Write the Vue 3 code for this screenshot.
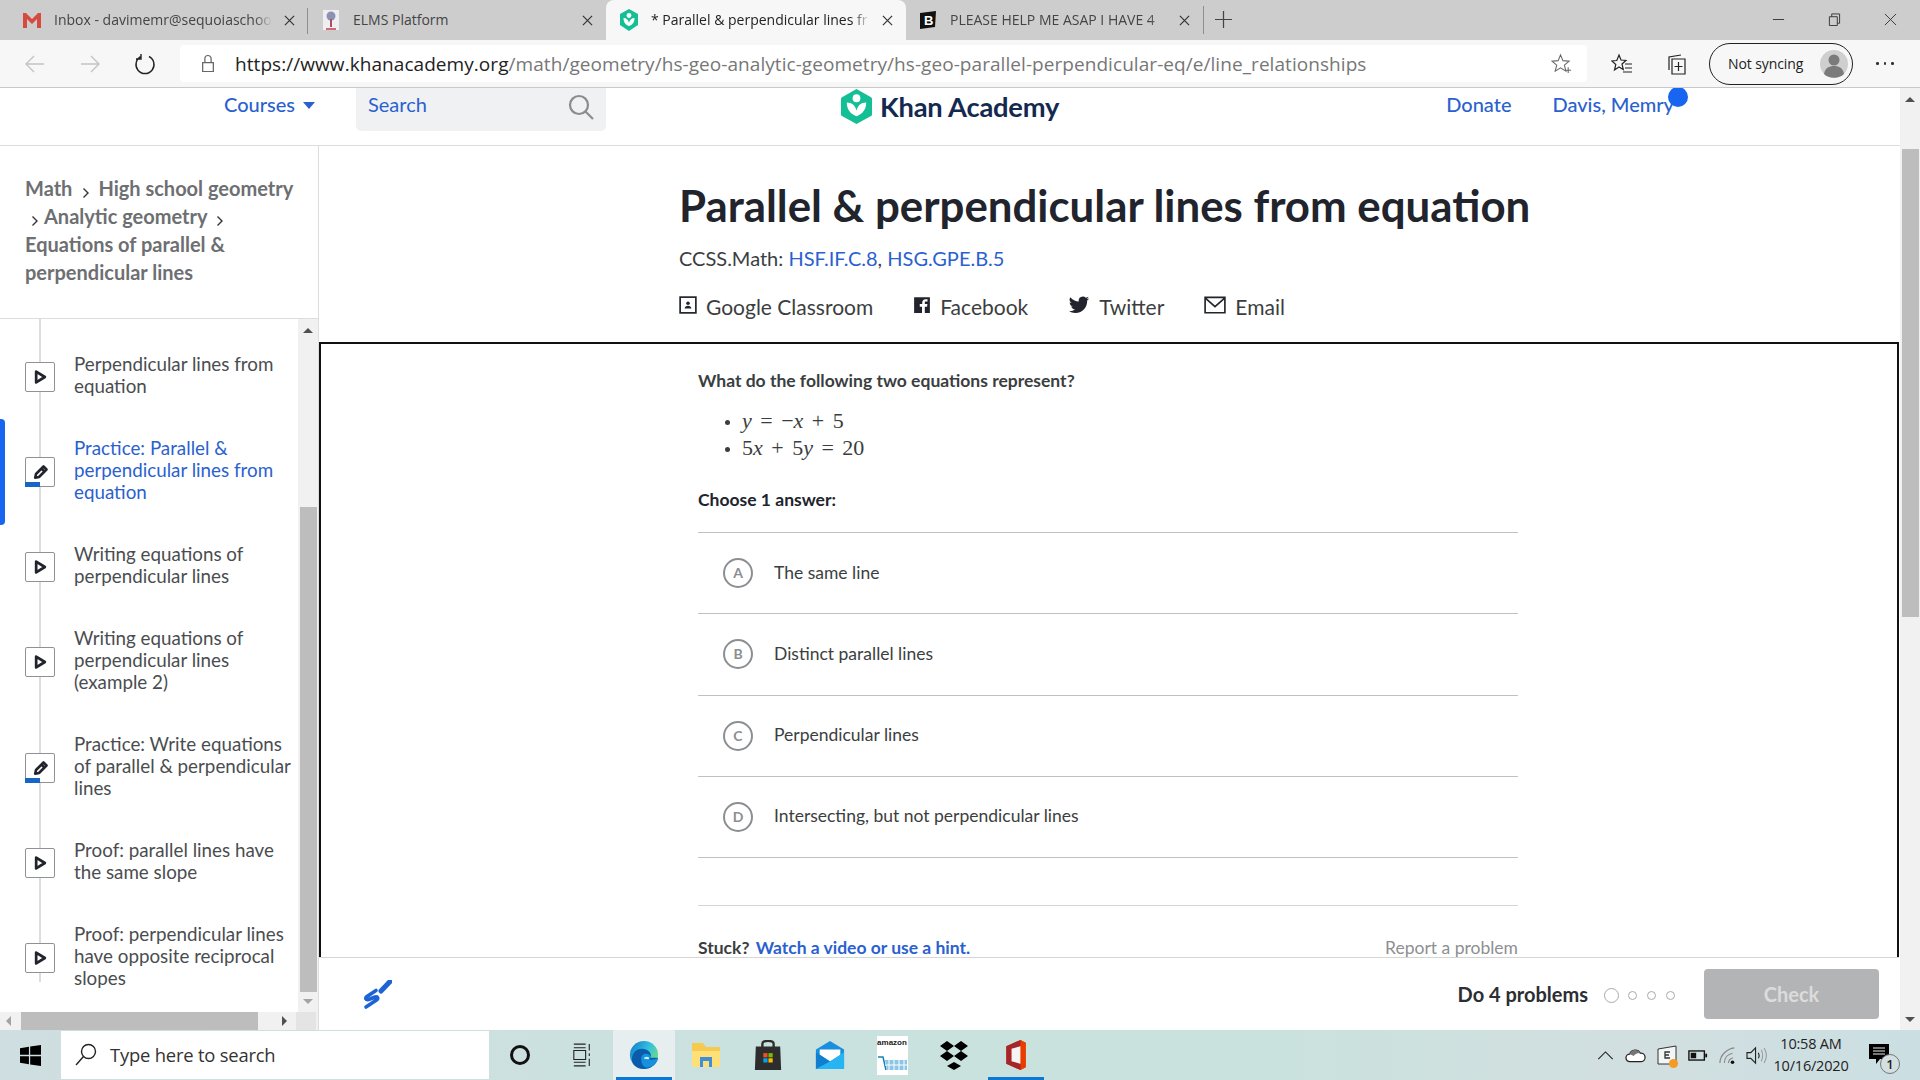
<script setup>
const tabs = [
  { id: 'gmail', title: 'Inbox - davimemr@sequoiaschoo', width: 308 },
  { id: 'elms', title: 'ELMS Platform', width: 298 },
  { id: 'ka', title: '* Parallel & perpendicular lines fr', width: 300, active: true },
  { id: 'brainly', title: 'PLEASE HELP ME ASAP I HAVE 4', width: 298 },
]

const lessons = [
  { kind: 'video', lines: 'Perpendicular lines from equation' },
  { kind: 'practice', lines: 'Practice: Parallel & perpendicular lines from equation', active: true },
  { kind: 'video', lines: 'Writing equations of perpendicular lines' },
  { kind: 'video', lines: 'Writing equations of perpendicular lines (example 2)' },
  { kind: 'practice', lines: 'Practice: Write equations of parallel & perpendicular lines' },
  { kind: 'video', lines: 'Proof: parallel lines have the same slope' },
  { kind: 'video', lines: 'Proof: perpendicular lines have opposite reciprocal slopes' },
]

const choices = [
  { key: 'A', text: 'The same line' },
  { key: 'B', text: 'Distinct parallel lines' },
  { key: 'C', text: 'Perpendicular lines' },
  { key: 'D', text: 'Intersecting, but not perpendicular lines' },
]
</script>

<template>
  <div class="screen">
    <!-- browser tabs -->
    <div class="tabs">
      <div
        v-for="t in tabs"
        :key="t.id"
        class="tab"
        :class="{ active: t.active, [t.id]: true }"
        :style="{ width: t.width + 'px' }"
      >
        <svg v-if="t.id === 'gmail'" class="fav" viewBox="0 0 20 20">
          <path d="M1 3h3l6 6 6-6h3v15h-4V9l-5 5-5-5v9H1z" fill="#d54b3d" />
        </svg>
        <svg v-else-if="t.id === 'elms'" class="fav" viewBox="0 0 20 20">
          <rect x="2" width="16" height="20" fill="#f0eef2" />
          <circle cx="10" cy="6" r="4.5" fill="#8a93b5" />
          <path d="M9 9h2v8H9z" fill="#b0505a" />
          <path d="M5 18h10v2H5z" fill="#cf6b73" />
        </svg>
        <svg v-else-if="t.id === 'ka'" class="fav" viewBox="0 0 20 22">
          <path d="M10 0l9 5v11l-9 6-9-6V5z" fill="#14bf96" />
          <circle cx="10" cy="6.5" r="2.4" fill="#fff" />
          <path d="M4.5 9c3 0 5 2 5.5 5 .5-3 2.500-5 5.500-5 0 4-2 7-5.500 8-3.500-1-5.500-4-5.500-8z" fill="#fff" />
        </svg>
        <svg v-else class="fav" viewBox="0 0 20 20">
          <path d="M2 3l16-2-1 16-15 2z" fill="#111" />
          <text x="6" y="15" class="fav-b">B</text>
        </svg>
        <span class="tab-title">{{ t.title }}</span>
        <svg class="tab-x" viewBox="0 0 12 12"><path d="M1 1l10 10M11 1L1 11" /></svg>
      </div>
      <div class="plus">
        <svg viewBox="0 0 18 18"><path d="M9 0v18M0 9h18" /></svg>
      </div>
      <div class="win-btns">
        <svg viewBox="0 0 14 14"><path d="M1 7h12" /></svg>
        <svg viewBox="0 0 14 14"><path d="M1.500 4h8.500v9.500H1.500zM4 4V1h8.500v10H10" /></svg>
        <svg viewBox="0 0 14 14"><path d="M1 1l12 12M13 1L1 13" /></svg>
      </div>
    </div>

    <!-- address bar -->
    <div class="toolbar">
      <svg class="nav-ico dim" viewBox="0 0 22 22"><path d="M20 11H2M10 3l-8 8 8 8" /></svg>
      <svg class="nav-ico dim" viewBox="0 0 22 22"><path d="M2 11h18M12 3l8 8-8 8" /></svg>
      <svg class="nav-ico" viewBox="0 0 22 22"><path d="M7 3.500A9 9 0 1 0 15 3.500M7 1v5H2" /></svg>
      <div class="address">
        <svg class="lock" viewBox="0 0 18 22"><path d="M3 10h12v10H3zM5.500 10V5.500a3.500 3.500 0 0 1 7 0V10" /></svg>
        <span class="url"><span class="host">https://www.khanacademy.org</span>/math/geometry/hs-geo-analytic-geometry/hs-geo-parallel-perpendicular-eq/e/line_relationships</span>
        <svg class="addr-star" viewBox="0 0 22 22"><path d="M10 2l2.500 6 6.500.5-5 4.200 1.600 6.300L10 15.500 4.400 19l1.600-6.300-5-4.200L7.500 8zM18 15v6M15 18h6" /></svg>
      </div>
      <svg class="tool-ico" viewBox="0 0 22 22"><path d="M8 2l2 5 5 .5-4 3.500 1.300 5.500L8 14l-4.500 3 1.300-5.500-4-3.500 5-.5zM14 11h7M14 15h7M12 19h9" /></svg>
      <svg class="tool-ico" viewBox="0 0 22 22"><path d="M6 6h13v15H6zM3 17V4l12-2M12.500 9v9M8.500 13.500h8" /></svg>
      <div class="sync">
        <span>Not syncing</span>
        <svg class="avatar" viewBox="0 0 28 28">
          <circle cx="14" cy="14" r="14" fill="#cfcfcf" />
          <circle cx="14" cy="10" r="5.500" fill="#7b7b7b" />
          <path d="M4 24c1-6 5-8 10-8s9 2 10 8c-5 5-15 5-20 0z" fill="#7b7b7b" />
        </svg>
      </div>
      <div class="more"><i></i><i></i><i></i></div>
    </div>

    <div class="page">
      <div class="site">
        <header class="topnav">
          <a class="nav-link courses">Courses<span class="caret"></span></a>
          <div class="search">
            <span>Search</span>
            <svg viewBox="0 0 26 26"><circle cx="11" cy="11" r="9" /><path d="M17.500 17.500L25 25" /></svg>
          </div>
          <div class="logo">
            <svg viewBox="0 0 34 38">
              <path d="M17 1l15 8.500c.6.300 1 1 1 1.700v16c0 .7-.4 1.400-1 1.700L17 37 2 28.900c-.6-.3-1-1-1-1.700v-16c0-.7.4-1.400 1-1.700z" fill="#14bf96" />
              <circle cx="17" cy="10.500" r="4" fill="#fff" />
              <path d="M7 15c5.500 0 9 3.500 10 8.500 1-5 4.500-8.500 10-8.500 0 7-3.500 12-10 14-6.500-2-10-7-10-14z" fill="#fff" />
            </svg>
            <span>Khan Academy</span>
          </div>
          <a class="nav-link donate">Donate</a>
          <a class="nav-link user">Davis, Memry<i class="dot"></i></a>
        </header>

        <div class="body">
          <aside class="side">
            <div class="crumbs">
              Math<svg class="chev first" viewBox="0 0 8 12"><path d="M1.500 1.500L6 6l-4.500 4.500" /></svg>High school geometry<br />
              <svg class="chev lead" viewBox="0 0 8 12"><path d="M1.500 1.500L6 6l-4.500 4.500" /></svg>Analytic geometry<svg class="chev tail" viewBox="0 0 8 12"><path d="M1.500 1.500L6 6l-4.500 4.500" /></svg><br />
              Equations of parallel &amp;<br />
              perpendicular lines
            </div>
            <div class="list-wrap">
              <div class="list-row">
                <ul class="lessons">
                  <li v-for="(l, i) in lessons" :key="i" class="lesson" :class="{ on: l.active }">
                    <span class="bar" v-if="l.active"></span>
                    <span class="lesson-ico">
                      <svg v-if="l.kind === 'video'" viewBox="0 0 12 14"><path d="M2 2l8 5-8 5z" /></svg>
                      <svg v-else class="pencil" viewBox="0 0 16 16"><path d="M10.500 2.500l3 3-7.500 7.500-3.800.8.800-3.800z" /><path d="M8.500 4.500l3 3" /></svg>
                      <i v-if="l.kind === 'practice'" class="prog"></i>
                    </span>
                    <span class="lesson-text">{{ l.lines }}</span>
                  </li>
                </ul>
                <div class="vscroll">
                  <i class="arr up"></i>
                  <div class="vtrack"><div class="vthumb"></div></div>
                  <i class="arr down"></i>
                </div>
              </div>
              <div class="hscroll">
                <i class="arr left"></i>
                <div class="hthumb"></div>
                <i class="arr right"></i>
                <div class="corner"></div>
              </div>
            </div>
          </aside>

          <main class="main">
            <section class="hero">
              <h1>Parallel &amp; perpendicular lines from equation</h1>
              <p class="ccss">CCSS.Math: <a>HSF.IF.C.8</a>, <a>HSG.GPE.B.5</a></p>
              <div class="share">
                <span>
                  <svg viewBox="0 0 16 16" class="s-ico"><rect x="1" y="1" width="14" height="14" fill="none" stroke="#21242c" stroke-width="1.500" /><circle cx="8" cy="6.500" r="1.600" fill="#21242c" /><path d="M5 11c0-3 6-3 6 0z" fill="#21242c" /></svg>
                  Google Classroom
                </span>
                <span>
                  <svg viewBox="0 0 16 16" class="s-ico"><path d="M1 1h14v14h-4.500V9.500h2l.3-2.300h-2.300V6c0-.7.200-1.100 1.200-1.100h1.200v-2c-.5-.1-1.100-.1-1.700-.1-1.800 0-3 1.100-3 3.100v1.300H6v2.300h2V15H1z" fill="#21242c" /></svg>
                  Facebook
                </span>
                <span>
                  <svg viewBox="0 0 24 24" class="s-ico tw"><path d="M23 4.900a9 9 0 0 1-2.600.7 4.500 4.500 0 0 0 2-2.500 9 9 0 0 1-2.900 1.100A4.500 4.500 0 0 0 11.800 8.300 12.900 12.900 0 0 1 2.500 3.600a4.500 4.500 0 0 0 1.400 6.100 4.500 4.500 0 0 1-2-.6v.1a4.500 4.500 0 0 0 3.600 4.400 4.500 4.500 0 0 1-2 .1 4.500 4.500 0 0 0 4.200 3.100A9 9 0 0 1 1 18.700 12.800 12.800 0 0 0 8 20.700c8.300 0 12.900-6.900 12.900-12.900v-.6A9 9 0 0 0 23 4.900z" fill="#21242c" /></svg>
                  Twitter
                </span>
                <span>
                  <svg viewBox="0 0 20 16" class="s-ico mail"><path d="M1 1h18v14H1zM1.500 2L10 9.500 18.500 2" fill="none" stroke="#21242c" stroke-width="1.500" /></svg>
                  Email
                </span>
              </div>
            </section>

            <section class="exercise">
              <div class="problem">
                <p class="q">What do the following two equations represent?</p>
                <ul class="eqs">
                  <li><i>y</i> = −<i>x</i> + 5</li>
                  <li>5<i>x</i> + 5<i>y</i> = 20</li>
                </ul>
                <p class="pick">Choose 1 answer:</p>
                <div class="choices">
                  <div v-for="c in choices" :key="c.key" class="choice">
                    <span class="letter">{{ c.key }}</span>
                    <span class="choice-text">{{ c.text }}</span>
                  </div>
                </div>
                <div class="stuck">
                  <span class="stuck-q">Stuck? <a>Watch a video or use a hint.</a></span>
                  <span class="report">Report a problem</span>
                </div>
              </div>
            </section>

            <footer class="foot">
              <svg class="scratch" viewBox="0 0 30 30">
                <path d="M28 1.500L19 11" class="pen" />
                <path d="M14 10.500L5 16.500c-3 2.500 0 4 3 2.500l5-2c3-1 3.500 1.500 1.500 3L4 27" class="squig" />
              </svg>
              <div class="goal">
                <b>Do 4 problems</b>
                <span class="dots"><i class="big"></i><i></i><i></i><i></i></span>
              </div>
              <button class="check">Check</button>
            </footer>
          </main>
        </div>
      </div>

      <div class="page-scroll">
        <i class="arr up"></i>
        <div class="ptrack"><div class="pthumb"></div></div>
        <i class="arr down"></i>
      </div>
    </div>

    <!-- windows taskbar -->
    <div class="taskbar">
      <svg class="start" viewBox="0 0 20 20"><path d="M0 3l8.500-1.300v7.700H0zM9.700 1.500L20 0v9.400H9.700zM0 10.600h8.500v7.700L0 17zM9.700 10.600H20V20L9.700 18.500z" /></svg>
      <div class="tsearch">
        <svg viewBox="0 0 22 24"><circle cx="13.500" cy="8.500" r="7" /><path d="M8.500 13.500L1 22" /></svg>
        <span>Type here to search</span>
      </div>
      <div class="apps">
        <span class="app"><i class="cortana"></i></span>
        <span class="app">
          <svg viewBox="0 0 22 26" class="taskview"><path d="M2 1h13M2 5h13M2 8h13v10H2zM2 21h13M2 25h13M19 1v7M19 11v3M19 17v8" /></svg>
        </span>
        <span class="app current">
          <svg viewBox="0 0 32 32">
            <defs>
              <linearGradient id="edgeA" x1="0" y1="0" x2="1" y2="0.600"><stop offset="0" stop-color="#0c78c8" /><stop offset="0.600" stop-color="#35c1e0" /><stop offset="1" stop-color="#6fdc7c" /></linearGradient>
            </defs>
            <circle cx="16" cy="16" r="15" fill="url(#edgeA)" />
            <path d="M3 20C4 10 12 8 18 10c5 2 7 7 4 9h9c-1 7-8 12-15 12C8 31 3 26 3 20z" fill="#0a5cab" />
            <path d="M13 20c0-5 5-7 9-4 2 2 1 4-1 4 2 2 7 1 10-1-1 7-9 12-14 10-3-2-4-5-4-9z" fill="#1591e0" />
            <path d="M16 20c0-2 3-3 5-1.500 1 1 .5 2-.5 2z" fill="#d8ebf0" />
          </svg>
        </span>
        <span class="app">
          <svg viewBox="0 0 30 30">
            <path d="M1 3h11l3 4h14v20H1z" fill="#f6c94f" />
            <path d="M1 11h28v16H1z" fill="#ffdf78" />
            <path d="M9 17h12v10h-3v-6h-6v6H9z" fill="#3f8fd6" />
          </svg>
        </span>
        <span class="app">
          <svg viewBox="0 0 30 32">
            <path d="M9 8V4c0-4 12-4 12 0v4" fill="none" stroke="#2d2d2d" stroke-width="2.500" />
            <path d="M2 7h26l1 25H1z" fill="#2d2d2d" />
            <path d="M10 14h4.500v4.500H10z" fill="#f25022" /><path d="M15.500 14H20v4.500h-4.500z" fill="#7fba00" />
            <path d="M10 19.500h4.500V24H10z" fill="#00a4ef" /><path d="M15.500 19.500H20V24h-4.500z" fill="#ffb900" />
          </svg>
        </span>
        <span class="app">
          <svg viewBox="0 0 32 30">
            <path d="M1 9L16 0l15 9v21H1z" fill="#1a8fdf" />
            <path d="M5 9h22v6l-11 7L5 15z" fill="#fff" />
            <path d="M1 12l15 10 15-10v18H1z" fill="#27b4f2" />
            <path d="M1 12l15 10L1 30z" fill="#0f7fd0" />
          </svg>
        </span>
        <span class="app">
          <span class="amazon">
            <span class="amazon-word">amazon</span>
            <svg viewBox="0 0 30 16"><path d="M1 1h5l3 13" fill="none" stroke="#1b7fb8" stroke-width="1.500" /><path d="M8 4h22v10H10z" fill="#8cc6e6" /><path d="M12 4v10M17 4v10M22 4v10M27 4v10M8 9h22" stroke="#fff" /></svg>
          </span>
        </span>
        <span class="app">
          <svg viewBox="0 0 30 30"><path d="M8 1l7 5-7 5-7-5zM22 1l7 5-7 5-7-5zM8 11l7 5-7 5-7-5zM22 11l7 5-7 5-7-5zM15 22l7 4-7 4-7-4z" fill="#000" /></svg>
        </span>
        <span class="app current-2">
          <svg viewBox="0 0 26 34">
            <path d="M2 7L18 0l6 3v28l-6 3L2 27z" fill="#d83b01" />
            <path d="M18 0l6 3v28l-6 3z" fill="#eb3c00" />
            <path d="M2 7L18 0v7L8 10v14l10 3v7L2 27z" fill="#a4262c" />
            <path d="M8 10l10-3v20l-10-3z" fill="#f4f4f4" />
          </svg>
        </span>
      </div>
      <div class="tray">
        <svg class="t-chev" viewBox="0 0 18 10"><path d="M1 9l8-8 8 8" /></svg>
        <svg class="t-cloud" viewBox="0 0 22 16"><path d="M5 15a4 4 0 0 1 0-8 6 6 0 0 1 11-1 4.500 4.500 0 0 1 1 9z" fill="#fff" stroke="#222" stroke-width="1.300" /><path d="M5 7a6 6 0 0 1 11-1c-4 0-6 2-7 3z" fill="#777" /></svg>
        <span class="t-sec">
          <svg viewBox="0 0 20 20"><path d="M1 4l18-3v18H1z" fill="#f3f6f6" stroke="#333" /><path d="M13 7H8v3h4M8 10v3h5" fill="none" stroke="#333" stroke-width="1.300" /></svg>
          <i></i>
        </span>
        <svg class="t-batt" viewBox="0 0 22 14"><rect x="1" y="2" width="17" height="10" fill="none" stroke="#111" stroke-width="1.500" /><rect x="3" y="4" width="6" height="6" fill="#111" /><path d="M19 5h2v4h-2z" fill="#111" /></svg>
        <svg class="t-wifi" viewBox="0 0 20 20"><path d="M1 19C1 10 9 3 17 2M6 19c0-6 4-10 9-11M10.500 19c0-3 2-5 5-6" fill="none" stroke="#888" stroke-width="1.300" /><circle cx="15" cy="18" r="2" fill="#111" /></svg>
        <svg class="t-vol" viewBox="0 0 22 20"><path d="M1 7h4l5-5v16l-5-5H1zM13 7c1 2 1 4 0 6" fill="none" stroke="#222" stroke-width="1.200" /><path d="M16 4c2 4 2 8 0 12M19 2c3 5 3 11 0 16" fill="none" stroke="#999" stroke-width="1.100" /></svg>
        <div class="clock"><span>10:58 AM</span><span>10/16/2020</span></div>
        <span class="notif">
          <svg viewBox="0 0 22 22"><path d="M1 1h20v15h-9l-4 5v-5H1z" fill="#000" /><path d="M5 5h12M5 8h12M5 11h12" stroke="#eee" stroke-width="1.200" /></svg>
          <i>1</i>
        </span>
      </div>
    </div>
  </div>
</template>

<style scoped>
.screen {
  width: 1920px;
  height: 1080px;
  display: flex;
  flex-direction: column;
  overflow: hidden;
  background: #fff;
  font-family: Lato, "Open Sans", sans-serif;
  color: #21242c;
}

/* TABS */
.tabs {
  height: 40px;
  flex: none;
  display: flex;
  align-items: stretch;
  background: #cdcdcd;
  font-family: "Open Sans", "Noto Sans", sans-serif;
  font-size: 14px;
  color: #444;
}

.tab {
  display: flex;
  align-items: center;
  box-sizing: border-box;
  padding: 0 10px 0 22px;
  gap: 12px;
  position: relative;
}

.tab.elms {
  padding-left: 13px;
}

.tab.ka {
  padding-left: 13px;
}

.tab.brainly {
  padding-left: 12px;
  border-right: 1px solid #8e8e8e;
  margin: 6px 0;
}

.tab.gmail::after {
  content: '';
  position: absolute;
  right: 0;
  top: 8px;
  bottom: 6px;
  width: 1px;
  background: #8e8e8e;
}

.tab.active {
  background: #f7f7f7;
  border-radius: 8px 8px 0 0;
  color: #222;
}

.fav {
  width: 20px;
  height: 22px;
  flex: none;
}

.fav-b {
  fill: #fff;
  font: 700 13px "Liberation Sans", sans-serif;
}

.tab-title {
  flex: 1;
  min-width: 0;
  margin-bottom: 2px;
  white-space: nowrap;
  overflow: hidden;
  padding-right: 8px;
  -webkit-mask-image: linear-gradient(to right, #000 92%, transparent);
  mask-image: linear-gradient(to right, #000 92%, transparent);
}

.tab.elms .tab-title {
  -webkit-mask-image: none;
  mask-image: none;
}

.tab-x {
  width: 11px;
  height: 11px;
  flex: none;
  margin-right: 3px;
  fill: none;
  stroke: #333;
  stroke-width: 1.3;
}

.plus {
  width: 38px;
  display: flex;
  align-items: center;
  justify-content: center;
  padding-bottom: 2px;
}

.plus svg {
  width: 17px;
  height: 17px;
  fill: none;
  stroke: #444;
  stroke-width: 1.3;
}

.win-btns {
  margin-left: auto;
  display: flex;
  align-items: center;
  gap: 43px;
  padding: 0 23px 2px 0;
}

.win-btns svg {
  width: 13px;
  height: 13px;
  fill: none;
  stroke: #333;
  stroke-width: 1;
}

/* TOOLBAR */
.toolbar {
  height: 48px;
  flex: none;
  box-sizing: border-box;
  display: flex;
  align-items: center;
  padding: 0 0 0 24px;
  background: #f7f7f7;
  border-bottom: 1px solid #c9c9c9;
}

.nav-ico {
  width: 22px;
  height: 22px;
  margin-right: 33px;
  fill: none;
  stroke: #222;
  stroke-width: 1.4;
}

.nav-ico:nth-child(3) {
  margin-right: 24px;
}

.nav-ico.dim {
  stroke: #c4c4c4;
}

.address {
  width: 1407px;
  height: 37px;
  flex: none;
  display: flex;
  align-items: center;
  padding-left: 20px;
  box-sizing: border-box;
  background: #fff;
  border-radius: 4px;
  position: relative;
}

.lock {
  width: 16px;
  height: 21px;
  fill: none;
  stroke: #666;
  stroke-width: 1.4;
  margin-right: 19px;
}

.url {
  font: 19px "Open Sans", "Noto Sans", sans-serif;
  color: #777;
  white-space: nowrap;
  letter-spacing: 0.06px;
}

.host {
  color: #222;
}

.addr-star {
  width: 21px;
  height: 21px;
  margin-left: auto;
  margin-right: 15px;
  fill: none;
  stroke: #666;
  stroke-width: 1.1;
}

.tool-ico {
  width: 22px;
  height: 22px;
  margin-left: 24px;
  fill: none;
  stroke: #222;
  stroke-width: 1.2;
}

.tool-ico + .tool-ico {
  margin-left: 33px;
}

.sync {
  width: 144px;
  height: 42px;
  margin-left: 21px;
  box-sizing: border-box;
  display: flex;
  align-items: center;
  justify-content: space-between;
  padding: 0 4px 0 18px;
  border: 1.5px solid #222;
  border-radius: 21px;
  font: 14px "Open Sans", "Noto Sans", sans-serif;
  letter-spacing: -0.1px;
  color: #222;
}

.avatar {
  width: 28px;
  height: 32px;
}

.more {
  display: flex;
  gap: 5px;
  margin-left: 23px;
}

.more i {
  width: 2.5px;
  height: 2.5px;
  border-radius: 50%;
  background: #333;
}

/* PAGE */
.page {
  flex: 1;
  min-height: 0;
  display: flex;
}

.site {
  flex: 1;
  min-width: 0;
  display: flex;
  flex-direction: column;
}

.topnav {
  height: 58px;
  flex: none;
  box-sizing: border-box;
  display: flex;
  align-items: flex-start;
  border-bottom: 1px solid #ddd;
  font-size: 20px;
  overflow: hidden;
}

.nav-link {
  color: #2a61cf;
  font-weight: 500;
  padding-top: 4px;
  position: relative;
}

.courses {
  margin-left: 224px;
  width: 144px;
  display: flex;
  align-items: center;
  line-height: 24px;
}

.caret {
  margin-left: 8px;
  margin-top: 3px;
  border-left: 6px solid transparent;
  border-right: 6px solid transparent;
  border-top: 7px solid #2a61cf;
}

.search {
  width: 250px;
  height: 43px;
  margin-left: -12px;
  box-sizing: border-box;
  padding: 4px 12px;
  display: flex;
  justify-content: space-between;
  align-items: flex-start;
  line-height: 24px;
  color: #2a61cf;
  background: #f0f1f2;
  border-radius: 0 0 5px 5px;
}

.search svg {
  width: 26px;
  height: 26px;
  margin-top: 2px;
  fill: none;
  stroke: #8a8c8f;
  stroke-width: 2.2;
}

.logo {
  margin-left: 234px;
  display: flex;
  align-items: center;
  gap: 7px;
  height: 37px;
  font-size: 27.3px;
  font-weight: 700;
  color: #14294f;
  letter-spacing: -0.2px;
}

.logo svg {
  width: 33px;
  height: 37px;
}

.donate {
  margin-left: 387px;
  line-height: 24px;
}

.user {
  margin-left: 41px;
  line-height: 24px;
}

.dot {
  position: absolute;
  right: -14px;
  top: -1px;
  width: 20px;
  height: 20px;
  border-radius: 50%;
  background: #1865f2;
}

.body {
  flex: 1;
  min-height: 0;
  display: flex;
}

/* SIDEBAR */
.side {
  width: 319px;
  flex: none;
  box-sizing: border-box;
  border-right: 1px solid #ddd;
  display: flex;
  flex-direction: column;
}

.crumbs {
  height: 173px;
  flex: none;
  box-sizing: border-box;
  padding: 28px 0 0 25px;
  border-bottom: 1px solid #ddd;
  font-size: 20px;
  font-weight: 700;
  line-height: 28px;
  color: #6d6f72;
  white-space: nowrap;
}

.chev {
  width: 8px;
  height: 12px;
  fill: none;
  stroke: #333;
  stroke-width: 1.4;
  vertical-align: -3px;
}

.chev.first {
  margin: 0 8px 0 10px;
}

.chev.lead {
  margin: 0 5px 0 6px;
}

.chev.tail {
  margin-left: 8px;
}

.list-wrap {
  flex: 1;
  min-height: 0;
  display: flex;
  flex-direction: column;
}

.list-row {
  flex: 1;
  min-height: 0;
  display: flex;
}

.lessons {
  flex: 1;
  margin: 0;
  padding: 15px 0 0;
  list-style: none;
  overflow: hidden;
  position: relative;
}

.lessons::before {
  content: '';
  position: absolute;
  left: 39px;
  top: 0;
  bottom: 30px;
  width: 2px;
  background: #dcdcdc;
}

.lesson {
  display: flex;
  align-items: center;
  padding: 20px 0;
  font-size: 18.8px;
  line-height: 22px;
  color: #4a4d50;
  position: relative;
}

.lesson:first-child {
  margin-top: -1px;
}

.lesson.on {
  color: #2a61cf;
}

.bar {
  position: absolute;
  left: 0;
  top: 2px;
  bottom: -2px;
  width: 5px;
  border-radius: 0 4px 4px 0;
  background: #1865f2;
}

.lesson-ico {
  width: 30px;
  height: 30px;
  flex: none;
  margin: 3px 19px 0 25px;
  box-sizing: border-box;
  border: 1px solid #8f9194;
  border-radius: 2px;
  background: #fff;
  display: flex;
  align-items: center;
  justify-content: center;
  position: relative;
  z-index: 1;
}

.lesson-ico svg {
  width: 13px;
  height: 16px;
  margin-left: 1px;
  fill: none;
  stroke: #21242c;
  stroke-width: 2.5;
  stroke-linejoin: round;
}

.lesson-ico .pencil {
  width: 16px;
  height: 16px;
  stroke-width: 2.6;
}

.prog {
  position: absolute;
  left: -1px;
  bottom: -1px;
  width: 15px;
  height: 5px;
  background: #1865c8;
}

.lesson-text {
  width: 222px;
  flex: none;
}

.vscroll {
  width: 20px;
  flex: none;
  background: #f1f1f1;
  display: flex;
  flex-direction: column;
  align-items: center;
}

.vtrack {
  flex: 1;
  width: 100%;
  display: flex;
  flex-direction: column;
  justify-content: flex-end;
}

.vthumb {
  width: 17px;
  height: 485px;
  margin-left: 2px;
  background: #bdbdbd;
}

.arr {
  display: block;
  width: 0;
  height: 0;
  flex: none;
}

.arr.up {
  margin: 9px 0 8px;
  border-left: 5px solid transparent;
  border-right: 5px solid transparent;
  border-bottom: 5px solid #505050;
}

.arr.down {
  margin: 7px 0 8px;
  border-left: 5px solid transparent;
  border-right: 5px solid transparent;
  border-top: 5px solid #a3a3a3;
}

.hscroll {
  height: 18px;
  flex: none;
  display: flex;
  align-items: center;
  background: #f1f1f1;
}

.arr.left {
  margin: 0 6px 0 6px;
  border-top: 5px solid transparent;
  border-bottom: 5px solid transparent;
  border-right: 5px solid #a3a3a3;
}

.hthumb {
  width: 237px;
  height: 100%;
  margin-left: 4px;
  background: #bdbdbd;
}

.arr.right {
  margin-left: 24px;
  border-top: 5px solid transparent;
  border-bottom: 5px solid transparent;
  border-left: 5px solid #505050;
}

.corner {
  width: 20px;
  height: 100%;
  margin-left: 9px;
  background: #e4e4e4;
}

/* MAIN */
.main {
  flex: 1;
  min-width: 0;
  display: flex;
  flex-direction: column;
}

.hero {
  height: 196px;
  flex: none;
  box-sizing: border-box;
  padding: 31px 0 0 360px;
}

.hero h1 {
  margin: 0;
  font-size: 43.8px;
  line-height: 56px;
  font-weight: 700;
  color: #21242c;
}

.ccss {
  margin: 13px 0 0;
  font-size: 20px;
  line-height: 24px;
  color: #3b3e40;
}

.ccss a {
  color: #2a61cf;
}

.share {
  margin-top: 24px;
  display: flex;
  gap: 40px;
  font-size: 21px;
  line-height: 26px;
  color: #3b3e40;
}

.share span {
  display: flex;
  align-items: center;
  gap: 9px;
}

.s-ico {
  width: 18px;
  height: 18px;
  margin-top: -4px;
}

.s-ico.tw {
  width: 22px;
  height: 22px;
}

.s-ico.mail {
  width: 22px;
  height: 18px;
}

.exercise {
  flex: 1;
  min-height: 0;
  margin-right: 1px;
  border: 2px solid #111;
  border-bottom: 0;
  overflow: hidden;
}

.problem {
  width: 820px;
  margin-left: 377px;
  font-size: 17.5px;
  line-height: 24px;
  color: #3b3e40;
}

.q {
  margin: 25px 0 0;
  font-weight: 700;
}

.eqs {
  margin: 14px 0 0;
  padding: 0 0 0 44px;
  font: 22px/27px "Liberation Serif", serif;
  word-spacing: 3px;
  color: #3b3e40;
}

.eqs li::marker {
  font-size: 17px;
}

.pick {
  margin: 27px 0 0;
  font-weight: 700;
  color: #21242c;
}

.choices {
  margin-top: 20px;
  border-top: 1px solid #bfc0c2;
}

.choice {
  height: 81.25px;
  box-sizing: border-box;
  display: flex;
  align-items: center;
  padding-left: 25px;
  gap: 21px;
  border-bottom: 1px solid #bfc0c2;
}

.choice-text {
  margin-bottom: 1px;
}

.letter {
  width: 30px;
  height: 30px;
  box-sizing: border-box;
  display: flex;
  align-items: center;
  justify-content: center;
  border: 2px solid #8c8e91;
  border-radius: 50%;
  font-size: 14px;
  font-weight: 700;
  color: #8c8e91;
}

.stuck {
  margin-top: 47px;
  padding-top: 33px;
  border-top: 1px solid #d4d5d6;
  display: flex;
  justify-content: space-between;
  line-height: 18px;
}

.stuck-q {
  font-weight: 700;
}

.stuck-q a {
  color: #2a61cf;
  margin-left: 2px;
}

.report {
  color: #8d8f92;
}

/* FOOTER */
.foot {
  height: 73px;
  flex: none;
  box-sizing: border-box;
  margin-right: 1px;
  border-top: 1px solid #d6d6d6;
  display: flex;
  align-items: center;
  padding: 0 20px 0 43px;
  position: relative;
  background: #fff;
}

.scratch {
  width: 30px;
  height: 30px;
  margin-top: 2px;
  fill: none;
  stroke: #1e63d6;
  stroke-linecap: round;
}

.pen {
  stroke-width: 5;
}

.squig {
  stroke-width: 3.6;
}

.goal {
  margin-left: auto;
  display: flex;
  align-items: center;
  gap: 16px;
  font-size: 20px;
}

.goal b {
  font-weight: 700;
  color: #2b2e33;
}

.dots {
  display: flex;
  align-items: center;
  gap: 10px;
  margin-top: 2px;
}

.dots i {
  width: 9px;
  height: 9px;
  box-sizing: border-box;
  border: 1.5px solid #a8aaad;
  border-radius: 50%;
}

.dots i.big {
  width: 15px;
  height: 15px;
  margin-right: -1px;
}

.check {
  width: 175px;
  height: 50px;
  margin-left: 29px;
  border: 0;
  border-radius: 4px;
  background: #b3b4b5;
  color: #dcdcdd;
  font: 700 20px Lato, sans-serif;
}

.page-scroll {
  width: 20px;
  flex: none;
  background: #f1f1f1;
  display: flex;
  flex-direction: column;
  align-items: center;
}

.ptrack {
  flex: 1;
  width: 100%;
  min-height: 0;
  padding-top: 39px;
  box-sizing: border-box;
}

.pthumb {
  width: 17px;
  height: 468px;
  margin-left: 2px;
  background: #bdbdbd;
}

.page-scroll .arr.down {
  border-top-color: #505050;
}

/* TASKBAR */
.taskbar {
  height: 50px;
  flex: none;
  display: flex;
  align-items: center;
  background: linear-gradient(to right, #cfdee0, #cae2df 40%, #c9e2dd 65%, #d2dfe0 85%, #cbdfe2);
  font-family: "Open Sans", "Noto Sans", sans-serif;
}

.start {
  width: 21px;
  height: 21px;
  margin-left: 20px;
  fill: #000;
  flex: none;
}

.tsearch {
  width: 428px;
  height: 48px;
  flex: none;
  margin-left: 20px;
  box-sizing: border-box;
  display: flex;
  align-items: center;
  padding: 0 0 1px 14px;
  gap: 13px;
  background: #fff;
  font-size: 18.4px;
  letter-spacing: -0.2px;
  color: #333;
}

.tsearch svg {
  width: 22px;
  height: 24px;
  fill: none;
  stroke: #222;
  stroke-width: 1.4;
}

.apps {
  display: flex;
  align-items: stretch;
  height: 50px;
}

.app {
  width: 62px;
  display: flex;
  align-items: center;
  justify-content: center;
  position: relative;
  box-sizing: border-box;
}

.app svg {
  width: 30px;
  height: 30px;
}

.app .taskview {
  width: 20px;
  height: 24px;
  fill: none;
  stroke: #222;
  stroke-width: 1.2;
}

.cortana {
  width: 20px;
  height: 20px;
  box-sizing: border-box;
  border: 3px solid #111;
  border-radius: 50%;
}

.app.current {
  background: #e6eeef;
}

.app.current::after,
.app.current-2::after {
  content: '';
  position: absolute;
  left: 3px;
  right: 3px;
  bottom: 0;
  height: 3px;
  background: #0a78d4;
}

.amazon {
  width: 31px;
  height: 39px;
  background: #fff;
  display: flex;
  flex-direction: column;
  align-items: center;
  overflow: hidden;
}

.amazon-word {
  font: 700 8px/14px "Liberation Sans", sans-serif;
  color: #222;
}

.app .amazon svg {
  width: 30px;
  height: 18px;
  margin-top: 5px;
}

.tray {
  margin-left: auto;
  display: flex;
  align-items: center;
  height: 100%;
  padding-right: 28px;
  gap: 11px;
}

.t-chev {
  width: 17px;
  height: 9px;
  fill: none;
  stroke: #222;
  stroke-width: 1.2;
}

.t-cloud {
  width: 21px;
  height: 16px;
}

.t-sec {
  position: relative;
  width: 20px;
  height: 20px;
}

.t-sec svg {
  width: 20px;
  height: 20px;
}

.t-sec i {
  position: absolute;
  right: -1px;
  bottom: -3px;
  width: 9px;
  height: 9px;
  border-radius: 50%;
  background: #f59a23;
}

.t-batt {
  width: 20px;
  height: 13px;
}

.t-wifi {
  width: 18px;
  height: 18px;
}

.t-vol {
  width: 21px;
  height: 19px;
  margin-left: -2px;
}

.clock {
  width: 78px;
  margin-left: -6px;
  display: flex;
  flex-direction: column;
  align-items: center;
  font-size: 14.5px;
  line-height: 22px;
  letter-spacing: -0.2px;
  color: #222;
  white-space: nowrap;
}

.notif {
  width: 24px;
  height: 24px;
  position: relative;
  margin-left: 7px;
}

.notif svg {
  width: 22px;
  height: 22px;
}

.notif i {
  position: absolute;
  right: -8px;
  bottom: -7px;
  width: 20px;
  height: 20px;
  box-sizing: border-box;
  border: 1px solid #777;
  border-radius: 50%;
  background: #d3dfe0;
  font-style: normal;
  font-size: 13px;
  font-weight: 600;
  line-height: 18px;
  text-align: center;
  color: #222;
}
</style>
